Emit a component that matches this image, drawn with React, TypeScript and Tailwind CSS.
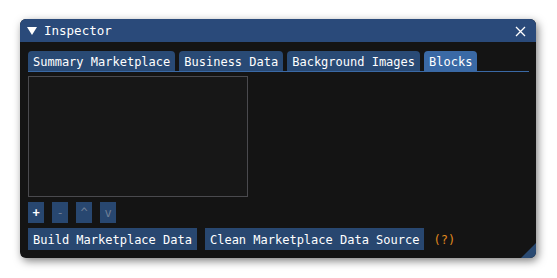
import React from "react";

const tabs = [
  { label: "Summary Marketplace", active: false },
  { label: "Business Data", active: false },
  { label: "Background Images", active: false },
  { label: "Blocks", active: true },
];

const smallButtons = [
  { label: "+", enabled: true },
  { label: "-", enabled: false },
  { label: "^", enabled: false },
  { label: "v", enabled: false },
];

const App: React.FC = () => {
  return (
    <div className="w-[557px] h-[278px] bg-white pt-[19px] pl-[20px] font-['DejaVu_Sans_Mono',monospace] text-[12px] leading-none">
      <div className="relative w-[516px] h-[239px] rounded-[6px] bg-[#141414] shadow-[2px_3px_8px_rgba(0,0,0,0.5)] overflow-hidden flex flex-col">
        {/* title bar */}
        <div className="h-[23px] bg-[#2a4a7a] flex items-center pl-[7px] pr-[6px] text-white">
          <svg width="10" height="8" viewBox="0 0 10 8" className="mr-[7px] mt-[1px]">
            <polygon points="0,0 10,0 5,8" fill="#ffffff" />
          </svg>
          <span className="text-[12.5px] pt-[2px]">Inspector</span>
          <div className="flex-1" />
          <svg width="11" height="11" viewBox="0 0 11 11" className="mr-[4px] mt-[1px]">
            <path d="M1 1 L10 10 M10 1 L1 10" stroke="#ffffff" strokeWidth="1.3" />
          </svg>
        </div>

        <div className="flex-1 flex flex-col px-[8px] pt-[9px]">
          {/* tabs */}
          <div className="flex gap-[4px] h-[20px] items-stretch">
            {tabs.map((t) => (
              <div
                key={t.label}
                className={`px-[5px] pt-[2px] rounded-t-[4px] flex items-center text-white ${
                  t.active ? "bg-[#3a69a5]" : "bg-[#294a75]"
                }`}
              >
                {t.label}
              </div>
            ))}
          </div>
          <div className="h-px w-[501px] bg-[#3a69a5]" />

          {/* list box */}
          <div className="mt-[4px] w-[220px] h-[121px] border border-[#4a4a4e] bg-[#171717]" />

          {/* small buttons */}
          <div className="mt-[5px] flex gap-[8px]">
            {smallButtons.map((b) => (
              <div
                key={b.label}
                className={`w-[16px] h-[21px] bg-[#284770] flex items-center justify-center ${
                  b.enabled ? "text-white font-bold" : "text-[#6f7f96]"
                }`}
              >
                {b.label}
              </div>
            ))}
          </div>

          {/* action buttons */}
          <div className="mt-[5px] flex items-center gap-[8px]">
            <div className="h-[22px] px-[5px] pt-[1px] bg-[#284770] text-white flex items-center">
              Build Marketplace Data
            </div>
            <div className="h-[22px] px-[5px] pt-[1px] bg-[#284770] text-white flex items-center">
              Clean Marketplace Data Source
            </div>
            <span className="ml-[1px] pt-[1px] text-[#e08a1e]">(?)</span>
          </div>
        </div>

        {/* resize grip */}
        <svg
          width="15"
          height="15"
          viewBox="0 0 15 15"
          className="absolute right-0 bottom-0"
        >
          <polygon points="15,0 15,15 0,15" fill="#2a4a72" />
        </svg>
      </div>
    </div>
  );
};

export default App;
